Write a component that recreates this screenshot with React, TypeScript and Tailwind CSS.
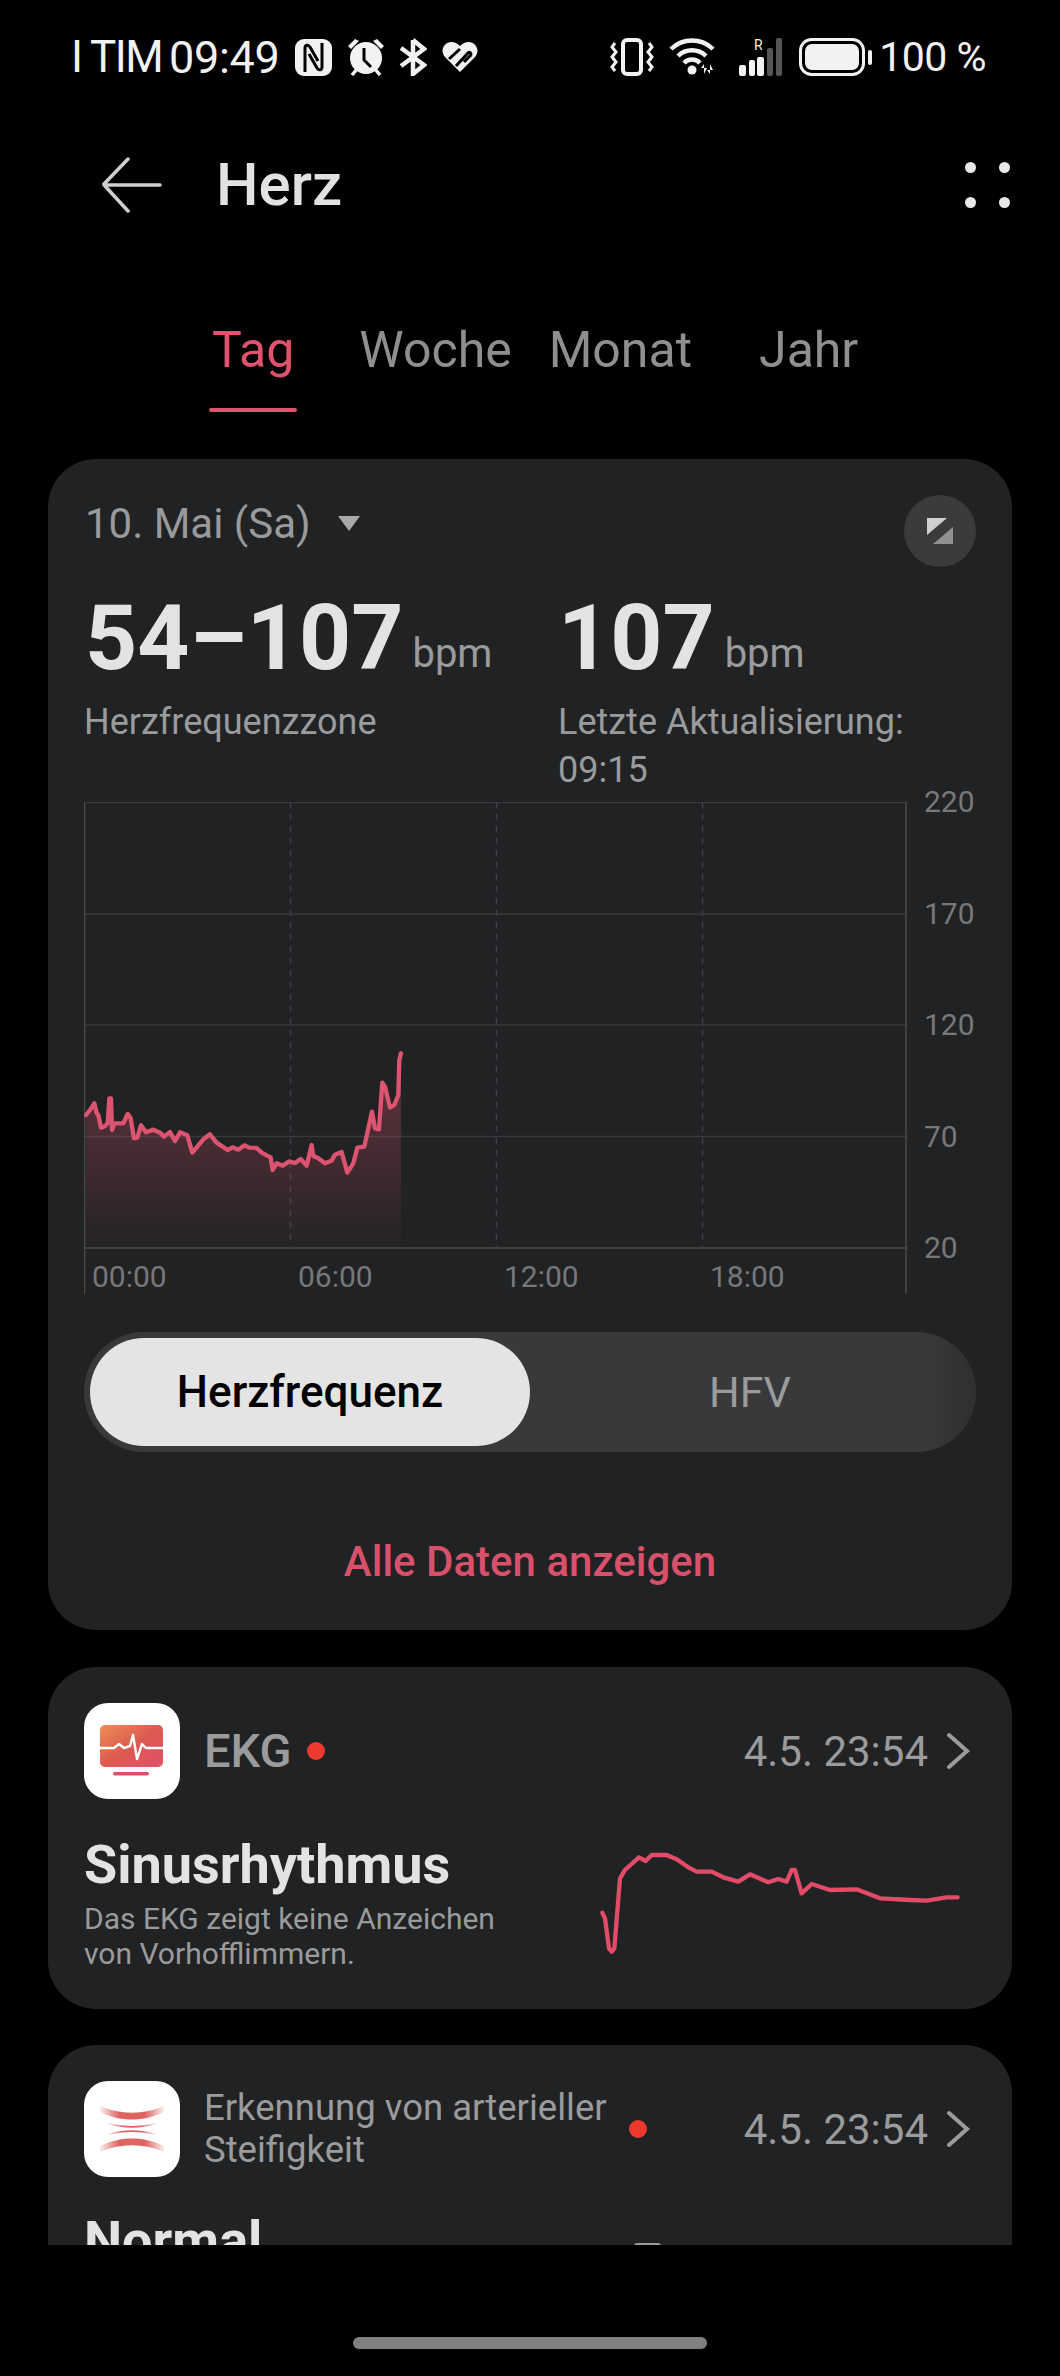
import React from "react";

const font = { fontFamily: "Roboto, 'Noto Sans', sans-serif" };

const hr: [number, number][] = [[78,345],[90,330],[103,310],[110,340],[115,345],[123,383],[135,378],[143,370],[148,295],[153,295],[156,390],[163,370],[190,370],[203,342],[212,355],[222,415],[232,413],[243,376],[258,397],[280,389],[300,398],[312,410],[330,396],[345,423],[360,397],[382,406],[397,458],[430,418],[450,403],[470,428],[503,450],[518,442],[535,449],[553,436],[568,443],[590,444],[605,458],[632,472],[638,510],[650,490],[668,497],[688,484],[705,489],[722,477],[740,497],[755,435],[760,468],[775,475],[795,490],[815,482],[825,464],[845,456],[862,518],[880,490],[892,443],[913,440],[925,385],[936,335],[945,385],[957,388],[967,248],[975,260],[990,322],[1003,315],[1015,285],[1018,180],[1023,160]];
const ecg: [number, number][] = [[127,578],[135,595],[147,685],[155,695],[163,685],[180,475],[195,450],[215,432],[237,412],[257,423],[275,405],[320,405],[350,418],[385,442],[410,455],[455,455],[490,472],[535,485],[570,463],[625,487],[655,477],[680,485],[695,450],[705,450],[725,520],[755,492],[810,510],[890,508],[960,535],[1050,540],[1100,542],[1160,532],[1193,532]];
const pts = (p: [number, number][]) => p.map(([x, y]) => `${x},${y}`).join(" ");

function StatusBar() {
  return (
    <div className="flex h-[114px] items-center pl-[71px] pr-[74px] leading-none text-[#f2f2f2]" style={font}>
      <span className="w-[98px] whitespace-nowrap text-[44px] tracking-[-1.5px]">I TIM</span>
      <span className="w-[126px] text-[45px] tracking-[-0.3px]">09:49</span>
      <svg width="37" height="37" viewBox="0 0 37 37"><rect width="37" height="37" rx="9" fill="#f2f2f2" /><path d="M10 33V9c0-3 3-4 5-1l8 14M27 4v24c0 3-3 4-5 1l-8-14" fill="none" stroke="#000" strokeWidth="3" /></svg>
      <svg width="38" height="38" viewBox="0 0 38 38" className="ml-[15px]"><circle cx="19" cy="20" r="16" fill="#f2f2f2" /><path d="M17 10v12l7 7" fill="none" stroke="#000" strokeWidth="3" /><path d="M1 8l7-7 4 2-8 8zM37 8l-7-7-4 2 8 8z" fill="#f2f2f2" /><path d="M5 37l5-6M33 37l-5-6" stroke="#f2f2f2" strokeWidth="3.5" /></svg>
      <svg width="28" height="38" viewBox="0 0 28 38" className="ml-[14px]"><path d="M14 2v34l11-9L2 10M14 2l11 9L2 28" fill="none" stroke="#f2f2f2" strokeWidth="4.5" /></svg>
      <svg width="36" height="30" viewBox="0 0 36 30" className="ml-[15px]"><path d="M18 30L3 15C-3 8 3 0 9 0c4 0 7 2 9 4 2-2 5-4 9-4 6 0 12 8 6 15z" fill="#f2f2f2" /><path d="M7 17L18 7M14 24L26 11c2-2 4 1 2 3L22 20" fill="none" stroke="#000" strokeWidth="3" /></svg>
      <div className="flex-1" />
      <svg width="44" height="38" viewBox="0 0 44 38"><rect x="13" y="2" width="18" height="34" rx="4" fill="none" stroke="#f2f2f2" strokeWidth="4" /><path d="M5 5l-3 4 4 5-4 5 4 5-4 5 3 4M39 5l3 4-4 5 4 5-4 5 4 5-3 4" fill="none" stroke="#f2f2f2" strokeWidth="3" /></svg>
      <svg width="46" height="38" viewBox="0 0 46 38" className="ml-[15px]"><path d="M2 11a30 30 0 0 1 42 0M9 18a20 20 0 0 1 28 0M15 25a11 11 0 0 1 16 0" fill="none" stroke="#f2f2f2" strokeWidth="4.5" /><circle cx="23" cy="32" r="4.5" fill="#f2f2f2" /><path d="M35 36v-10l-3 4h6zM41 26v10l-3-4h6z" fill="#f2f2f2" /></svg>
      <svg width="43" height="40" viewBox="0 0 43 40" className="ml-[24px]"><rect x="0" y="28" width="7" height="11" rx="2" fill="#f2f2f2" /><rect x="10" y="23" width="6" height="16" rx="2" fill="#f2f2f2" /><rect x="18" y="20" width="7" height="19" rx="2" fill="#f2f2f2" /><rect x="28" y="11" width="6" height="28" rx="2" fill="#555" /><rect x="37" y="1" width="6" height="38" rx="2" fill="#555" /><text x="15" y="13" fontSize="14" fill="#f2f2f2" style={font}>R</text></svg>
      <svg width="74" height="38" viewBox="0 0 74 38" className="ml-[17px]"><rect x="1.5" y="1.5" width="63" height="35" rx="11" fill="none" stroke="#f2f2f2" strokeWidth="3" /><rect x="6" y="6" width="54" height="26" rx="7" fill="#f2f2f2" /><rect x="69" y="12" width="4" height="15" rx="2" fill="#f2f2f2" /></svg>
      <span className="ml-[6px] whitespace-nowrap text-[41px] tracking-[-0.5px]">100 %</span>
    </div>
  );
}

function Header() {
  return (
    <div className="flex h-[142px] items-center pl-[102px] pr-[50px]">
      <svg width="60" height="56" viewBox="0 0 60 56" fill="none" stroke="#cfcfcf" strokeWidth="3.5" strokeLinecap="round"><path d="M58 28H2M26 2L2 27M26 54L3 29" /></svg>
      <span className="ml-[54px] text-[60px] font-medium leading-none text-[#e2e2e2]" style={font}>Herz</span>
      <div className="flex-1" />
      <div className="grid grid-cols-2 gap-x-[23px] gap-y-[24px]">
        <i className="size-[11px] rounded-full bg-[#e8e8e8]" /><i className="size-[11px] rounded-full bg-[#e8e8e8]" />
        <i className="size-[11px] rounded-full bg-[#e8e8e8]" /><i className="size-[11px] rounded-full bg-[#e8e8e8]" />
      </div>
    </div>
  );
}

function Tabs() {
  return (
    <div className="relative flex h-[203px] items-start pt-[66px] text-[50px] leading-[56px] text-[#8e8f90]" style={font}>
      <span className="ml-[212px] text-[#e0526e]">Tag</span>
      <span className="ml-[65px]">Woche</span>
      <span className="ml-[37px]">Monat</span>
      <span className="ml-[67px]">Jahr</span>
      <div className="absolute left-[209px] top-[152px] h-[4px] w-[88px] rounded-full bg-[#e0526e]" />
    </div>
  );
}

function Chart() {
  const yLabels = ["220", "170", "120", "70", "20"];
  const xLabels = ["00:00", "06:00", "12:00", "18:00"];
  const d = pts(hr);
  return (
    <div className="relative ml-[36px] mt-[8px] w-[928px]">
      <div className="flex">
        <svg width="823" height="492" viewBox="0 0 823 492" className="block">
          <defs>
            <linearGradient id="fillHr" x1="0" y1="0" x2="0" y2="1">
              <stop offset="0" stopColor="#e0526e" stopOpacity="0.36" />
              <stop offset="1" stopColor="#e0526e" stopOpacity="0.02" />
            </linearGradient>
          </defs>
          {[0.5, 112, 223, 334.5, 446].map((y) => (
            <line key={y} x1="0" x2="823" y1={y} y2={y} stroke={y === 446 ? "#4a4b4d" : "#38393b"} strokeWidth="1.5" />
          ))}
          <line x1="0.5" x2="0.5" y1="0" y2="492" stroke="#4a4b4d" strokeWidth="1.5" />
          <line x1="822" x2="822" y1="0" y2="492" stroke="#4a4b4d" strokeWidth="1.5" />
          {[206.5, 412.5, 618.5].map((x) => (
            <line key={x} x1={x} x2={x} y1="0" y2="446" stroke="#3e3f41" strokeWidth="1.5" strokeDasharray="6 6" />
          ))}
          <g transform="translate(-24 198) scale(0.3333)">
            <polygon points={`78,742 ${d} 1023,742`} fill="url(#fillHr)" />
            <polyline points={d} fill="none" stroke="#dd5470" strokeWidth="13" strokeLinejoin="round" strokeLinecap="round" />
          </g>
        </svg>
        <div className="-mt-[17px] ml-[17px] flex h-[480px] flex-col justify-between text-[30px] leading-[34px] text-[#77787a]" style={font}>
          {yLabels.map((l) => <span key={l}>{l}</span>)}
        </div>
      </div>
      <div className="absolute left-[8px] top-[458px] flex text-[30px] leading-[34px] text-[#77787a]" style={font}>
        {xLabels.map((l) => <span key={l} className="w-[206px]">{l}</span>)}
      </div>
    </div>
  );
}

function Toggle() {
  return (
    <div className="mx-[36px] mt-[38px] flex h-[120px] items-center rounded-full bg-gradient-to-r from-[#38393b] from-94% to-[#2e2f31] p-[6px]" style={font}>
      <div className="flex h-[108px] w-[440px] items-center justify-center rounded-full bg-[#e4e4e4] text-[44px] font-medium text-black">Herzfrequenz</div>
      <div className="flex-1 text-center text-[43px] text-[#9a9b9c]">HFV</div>
    </div>
  );
}

function MainCard() {
  return (
    <section className="mx-[48px] h-[1171px] rounded-[48px] bg-[#212224] pt-[36px]" style={font}>
      <div className="flex items-start justify-between pl-[37px] pr-[36px]">
        <div className="flex h-[56px] items-center text-[42px] text-[#999a9b]">
          10. Mai (Sa)
          <svg width="22" height="15" viewBox="0 0 22 15" className="ml-[27px]"><path d="M0 0h22l-11 15z" fill="#a8a9aa" /></svg>
        </div>
        <div className="flex size-[72px] items-center justify-center rounded-full bg-[#3a3b3d]">
          <svg width="26" height="26" viewBox="0 0 26 26"><path d="M0 0h20L0 17z" fill="#d0d0d0" /><path d="M26 26H6L26 9z" fill="#8f9091" /></svg>
        </div>
      </div>
      <div className="mt-[21px] flex pl-[37px]">
        <div className="w-[473px]">
          <div className="flex h-[100px] items-end whitespace-nowrap">
            <span className="text-[91px] font-bold leading-[100px] text-[#e3e3e3]">54–107</span>
            <span className="mb-[14px] ml-[9px] text-[40px] leading-none text-[#9a9b9c]">bpm</span>
          </div>
          <div className="-ml-[1px] mt-[10px] text-[36px] leading-[48px] text-[#9a9b9c]">Herzfrequenzzone</div>
        </div>
        <div>
          <div className="flex h-[100px] items-end whitespace-nowrap">
            <span className="text-[91px] font-bold leading-[100px] text-[#e3e3e3]">107</span>
            <span className="mb-[14px] ml-[10px] text-[40px] leading-none text-[#9a9b9c]">bpm</span>
          </div>
          <div className="mt-[10px] text-[36px] leading-[48px] text-[#9a9b9c]">Letzte Aktualisierung:<br />09:15</div>
        </div>
      </div>
      <Chart />
      <Toggle />
      <div className="mt-[87px] text-center text-[42px] font-medium leading-[46px] text-[#d9506b]">Alle Daten anzeigen</div>
    </section>
  );
}

function DateRow() {
  return (
    <div className="flex items-center text-[42px] text-[#9a9b9c]" style={font}>
      <span>4.5. 23:54</span>
      <svg width="24" height="38" viewBox="0 0 24 38" fill="none" stroke="#9a9b9c" strokeWidth="4" strokeLinecap="round" className="ml-[18px] mr-[6px]"><path d="M3 3l18 16L3 35" /></svg>
    </div>
  );
}

function EcgCard() {
  return (
    <section className="mx-[48px] mt-[37px] h-[342px] rounded-[48px] bg-[#212224] px-[36px] pt-[36px]" style={font}>
      <div className="flex items-center">
        <div className="flex size-[96px] items-center justify-center rounded-[24px] bg-white">
          <svg width="64" height="52" viewBox="0 0 64 52">
            <defs><linearGradient id="ecgG" x1="0" y1="0" x2="1" y2="1"><stop offset="0" stopColor="#ec8f55" /><stop offset="0.5" stopColor="#dd5a50" /><stop offset="1" stopColor="#e0506a" /></linearGradient></defs>
            <rect x="0" y="0" width="63" height="42" rx="5" fill="url(#ecgG)" />
            <path d="M0 23h14l5-4 5 4 6-2 3-11 4 24 5-15 4 4h17" fill="none" stroke="#fff" strokeWidth="2.4" strokeLinejoin="round" />
            <rect x="13" y="47" width="36" height="3.5" rx="1.7" fill="#e0506a" />
          </svg>
        </div>
        <span className="ml-[24px] text-[47px] font-medium text-[#9a9b9c]">EKG</span>
        <i className="ml-[15px] size-[18px] rounded-full bg-[#ee3a2d]" />
        <div className="flex-1" />
        <DateRow />
      </div>
      <div className="mt-[36px] flex">
        <div className="w-[512px]">
          <div className="text-[54px] font-bold leading-[60px] text-[#e3e3e3]">Sinusrhythmus</div>
          <div className="mt-[6px] text-[30px] leading-[35px] text-[#9a9b9c]">Das EKG zeigt keine Anzeichen<br />von Vorhofflimmern.</div>
        </div>
        <svg width="370" height="125" viewBox="0 0 370 125" className="shrink-0">
          <g transform="translate(-36 -115) scale(0.3333)">
            <polyline points={pts(ecg)} fill="none" stroke="#e34c66" strokeWidth="13" strokeLinejoin="round" strokeLinecap="round" />
          </g>
        </svg>
      </div>
    </section>
  );
}

function ArterialIcon() {
  return (
    <svg width="64" height="46" viewBox="0 0 64 46">
      <defs>
        <linearGradient id="artG" x1="0" y1="0" x2="1" y2="0">
          <stop offset="0" stopColor="#d9534f" stopOpacity="0.1" />
          <stop offset="0.3" stopColor="#d9534f" stopOpacity="0.9" />
          <stop offset="0.7" stopColor="#d9534f" stopOpacity="0.9" />
          <stop offset="1" stopColor="#d9534f" stopOpacity="0.1" />
        </linearGradient>
      </defs>
      <path d="M0 0c20 9 44 9 64 0v6C44 16 20 16 0 6z" fill="url(#artG)" />
      <path d="M8 17c15 4 33 4 48 0v1c-15 5-33 5-48 0z" fill="url(#artG)" />
      <path d="M8 29c15-4 33-4 48 0v-1c-15-5-33-5-48 0z" fill="url(#artG)" />
      <path d="M0 46c20-9 44-9 64 0v-6C44 30 20 30 0 40z" fill="url(#artG)" />
    </svg>
  );
}

function ArterialCard() {
  return (
    <section className="mx-[48px] mt-[36px] h-[300px] rounded-t-[48px] bg-[#212224] px-[36px] pt-[36px]" style={font}>
      <div className="flex items-center">
        <div className="flex size-[96px] items-center justify-center rounded-[24px] bg-white">
          <ArterialIcon />
        </div>
        <div className="ml-[24px] w-[405px] whitespace-nowrap text-[36.5px] leading-[42px] text-[#9a9b9c]">Erkennung von arterieller<br />Steifigkeit</div>
        <i className="ml-[20px] size-[18px] rounded-full bg-[#ee3a2d]" />
        <div className="flex-1" />
        <DateRow />
      </div>
      <div className="mt-[34px] flex">
        <div className="w-[550px] text-[54px] font-bold leading-[60px] text-[#e3e3e3]">Normal</div>
        <div className="mt-[32px] h-[8px] w-[27px] rounded-t-[3px] bg-[#9a9b9c]" />
      </div>
    </section>
  );
}

export default function App() {
  return (
    <div className="flex h-[2376px] w-[1060px] flex-col bg-black">
      <div className="h-[2245px] shrink-0 overflow-hidden">
        <StatusBar />
        <Header />
        <Tabs />
        <MainCard />
        <EcgCard />
        <ArterialCard />
      </div>
      <div className="mx-auto mt-[92px] h-[12px] w-[354px] rounded-full bg-[#808080]" />
    </div>
  );
}
